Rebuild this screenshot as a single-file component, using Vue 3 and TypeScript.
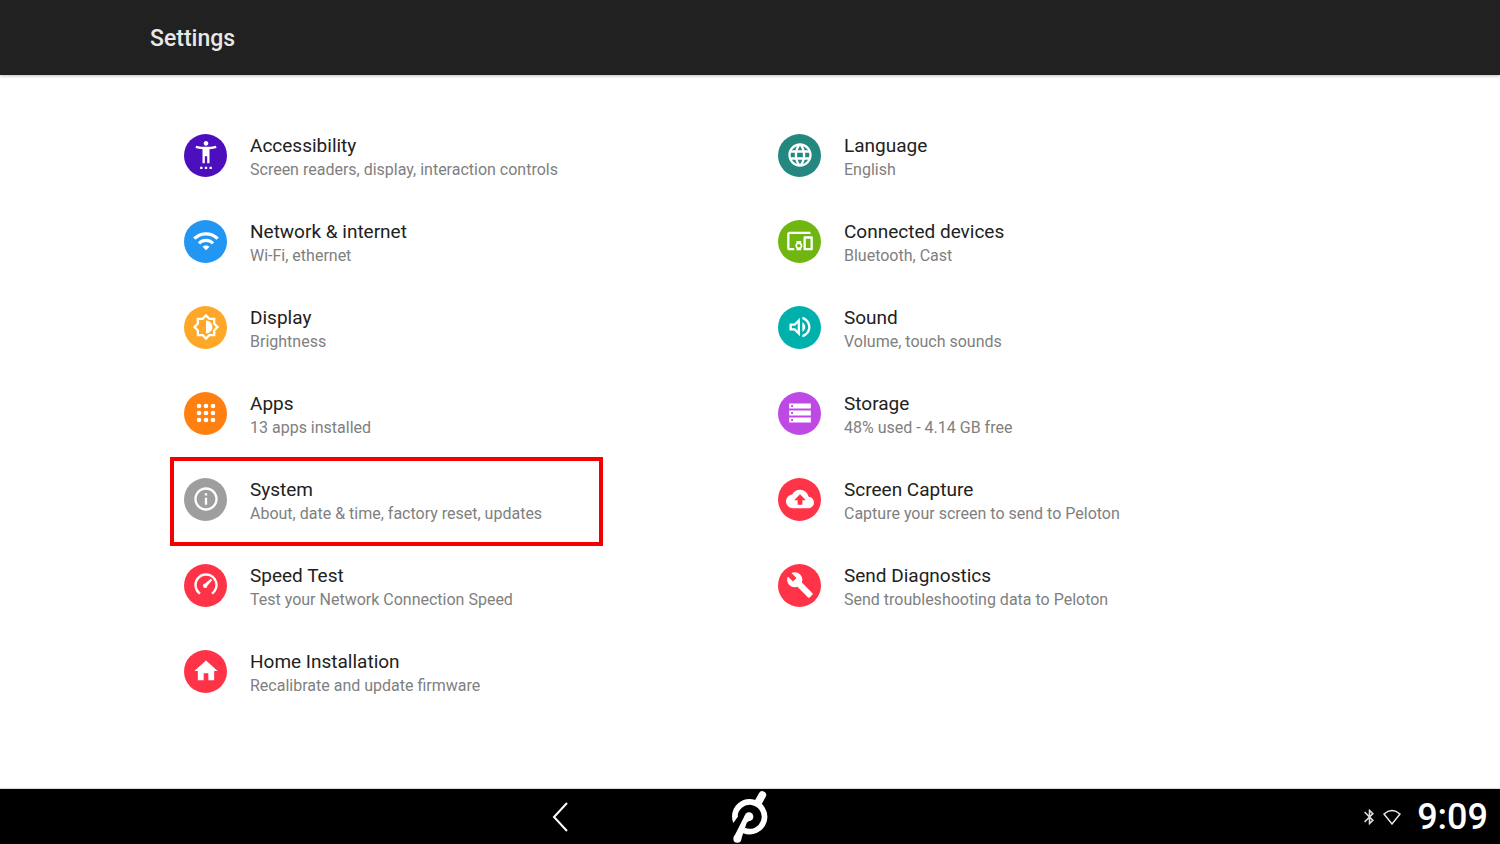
<script setup lang="ts">
interface SettingItem {
  title: string
  detail: string
  color: string
  path: string
  marked?: boolean
}

const items: SettingItem[] = [
  {
    title: 'Accessibility',
    detail: 'Screen readers, display, interaction controls',
    color: '#4d0fbe',
    path: 'M20.5 4c-2.61.7-5.67 1-8.5 1s-5.89-.3-8.5-1L3 6c1.86.5 4 .83 6 1v12h2v-6h2v6h2V7c2-.17 4.14-.5 6-1l-.5-2zM12 4c1.1 0 2-.9 2-2s-.9-2-2-2-2 .9-2 2 .9 2 2 2zM7 24h2v-2H7v2zm4 0h2v-2h-2v2zm4 0h2v-2h-2v2z',
  },
  {
    title: 'Language',
    detail: 'English',
    color: '#248880',
    path: 'M11.99 2C6.47 2 2 6.48 2 12s4.47 10 9.99 10C17.52 22 22 17.52 22 12S17.52 2 11.99 2zm6.93 6h-2.95c-.32-1.25-.78-2.45-1.38-3.56 1.84.63 3.37 1.91 4.33 3.56zM12 4.04c.83 1.2 1.48 2.53 1.91 3.96h-3.82c.43-1.43 1.08-2.76 1.91-3.96zM4.26 14C4.1 13.36 4 12.69 4 12s.1-1.36.26-2h3.38c-.08.66-.14 1.32-.14 2s.06 1.34.14 2H4.26zm.82 2h2.95c.32 1.25.78 2.45 1.38 3.56-1.84-.63-3.37-1.9-4.33-3.56zm2.95-8H5.08c.96-1.66 2.49-2.93 4.33-3.56C8.81 5.55 8.35 6.75 8.03 8zM12 19.96c-.83-1.2-1.48-2.53-1.91-3.96h3.82c-.43 1.43-1.08 2.76-1.91 3.96zM14.34 14H9.66c-.09-.66-.16-1.32-.16-2s.07-1.35.16-2h4.68c.09.65.16 1.32.16 2s-.07 1.34-.16 2zm.25 5.56c.6-1.11 1.06-2.31 1.38-3.56h2.95c-.96 1.65-2.49 2.93-4.33 3.56zM16.36 14c.08-.66.14-1.32.14-2s-.06-1.34-.14-2h3.38c.16.64.26 1.31.26 2s-.1 1.36-.26 2h-3.38z',
  },
  {
    title: 'Network & internet',
    detail: 'Wi-Fi, ethernet',
    color: '#2196f3',
    path: 'M1 9l2 2c4.97-4.97 13.03-4.97 18 0l2-2C16.93 2.93 7.08 2.93 1 9zm8 8l3 3 3-3c-1.65-1.66-4.34-1.66-6 0zm-4-4l2 2c2.76-2.76 7.24-2.76 10 0l2-2C15.14 9.14 8.87 9.14 5 13z',
  },
  {
    title: 'Connected devices',
    detail: 'Bluetooth, Cast',
    color: '#6fb710',
    path: 'M3 6h18V4H3c-1.1 0-2 .9-2 2v12c0 1.1.9 2 2 2h4v-2H3V6zm10 6H9v1.78c-.61.55-1 1.33-1 2.22s.39 1.67 1 2.22V20h4v-1.78c.61-.55 1-1.34 1-2.22s-.39-1.67-1-2.22V12zm-2 5.5c-.83 0-1.5-.67-1.5-1.5s.67-1.5 1.5-1.5 1.5.67 1.5 1.5-.67 1.5-1.5 1.5zM22 8h-6c-.5 0-1 .5-1 1v10c0 .5.5 1 1 1h6c.5 0 1-.5 1-1V9c0-.5-.5-1-1-1zm-1 10h-4v-8h4v8z',
  },
  {
    title: 'Display',
    detail: 'Brightness',
    color: '#ffa726',
    path: 'M20 8.69V4h-4.69L12 .69 8.69 4H4v4.69L.69 12 4 15.31V20h4.69L12 23.31 15.31 20H20v-4.69L23.31 12 20 8.69zm-2 5.79V18h-3.52L12 20.48 9.52 18H6v-3.52L3.52 12 6 9.52V6h3.52L12 3.52 14.48 6H18v3.52L20.48 12 18 14.48zM12 6.5v11c3.03 0 5.5-2.47 5.5-5.5S15.03 6.5 12 6.5z',
  },
  {
    title: 'Sound',
    detail: 'Volume, touch sounds',
    color: '#00b0ac',
    path: 'M3 9v6h4l5 5V4L7 9H3zm7-.17v6.34L7.83 13H5v-2h2.83L10 8.83zM16.5 12c0-1.77-1.02-3.29-2.5-4.03v8.05c1.48-.73 2.5-2.25 2.5-4.02zM14 3.23v2.06c2.89.86 5 3.54 5 6.71s-2.11 5.85-5 6.71v2.06c4.01-.91 7-4.49 7-8.77s-2.99-7.86-7-8.77z',
  },
  {
    title: 'Apps',
    detail: '13 apps installed',
    color: '#ff7f11',
    path: 'M6 4a2 2 0 1 1 0 4a2 2 0 0 1 0-4zM12 4a2 2 0 1 1 0 4a2 2 0 0 1 0-4zM18 4a2 2 0 1 1 0 4a2 2 0 0 1 0-4zM6 10a2 2 0 1 1 0 4a2 2 0 0 1 0-4zM12 10a2 2 0 1 1 0 4a2 2 0 0 1 0-4zM18 10a2 2 0 1 1 0 4a2 2 0 0 1 0-4zM6 16a2 2 0 1 1 0 4a2 2 0 0 1 0-4zM12 16a2 2 0 1 1 0 4a2 2 0 0 1 0-4zM18 16a2 2 0 1 1 0 4a2 2 0 0 1 0-4z',
  },
  {
    title: 'Storage',
    detail: '48% used - 4.14 GB free',
    color: '#bf49e5',
    path: 'M2.7 3.9h18.6v4.2H2.7zM4.4 5.2v1.6H6V5.200zM2.7 9.900h18.6v4.200H2.7zM4.4 11.200v1.600H6v-1.600zM2.700 15.900h18.600v4.200H2.700zM4.400 17.200v1.600H6v-1.600z',
  },
  {
    title: 'System',
    detail: 'About, date & time, factory reset, updates',
    color: '#9e9e9e',
    path: 'M11 7h2v2h-2zm0 4h2v6h-2zm1-9C6.48 2 2 6.48 2 12s4.48 10 10 10 10-4.48 10-10S17.52 2 12 2zm0 18c-4.41 0-8-3.59-8-8s3.59-8 8-8 8 3.59 8 8-3.59 8-8 8z',
    marked: true,
  },
  {
    title: 'Screen Capture',
    detail: 'Capture your screen to send to Peloton',
    color: '#ff3347',
    path: 'M19.35 10.04C18.67 6.59 15.64 4 12 4 9.11 4 6.6 5.64 5.35 8.04 2.34 8.36 0 10.91 0 14c0 3.31 2.69 6 6 6h13c2.76 0 5-2.24 5-5 0-2.64-2.05-4.78-4.65-4.96zM14 13v4h-4v-4H7l5-5 5 5h-3z',
  },
  {
    title: 'Speed Test',
    detail: 'Test your Network Connection Speed',
    color: '#ff3347',
    path: 'M12 2A10 10 0 0 0 2 12c0 3.3 1.6 6.3 4.1 8.1l1.4-1.5A8 8 0 1 1 20 12c0 2.7-1.4 5.1-3.5 6.6l1.4 1.5A10 10 0 0 0 12 2zM17.3 7.9l-1.2-1.2-4.8 4.1a1.9 1.9 0 1 0 1.9 1.9z',
  },
  {
    title: 'Send Diagnostics',
    detail: 'Send troubleshooting data to Peloton',
    color: '#ff3347',
    path: 'M22.7 19l-9.1-9.1c.9-2.3.4-5-1.5-6.9-2-2-5-2.4-7.4-1.3L9 6 6 9 1.6 4.7C.4 7.1.9 10.1 2.9 12.1c1.9 1.9 4.6 2.4 6.9 1.5l9.1 9.1c.4.4 1 .4 1.4 0l2.3-2.3c.5-.4.5-1.1.1-1.4z',
  },
  {
    title: 'Home Installation',
    detail: 'Recalibrate and update firmware',
    color: '#ff3347',
    path: 'M10 20v-6h4v6h5v-8h3L12 3 2 12h3v8z',
  },
]
</script>

<template>
  <div class="screen">
    <header class="top-bar">
      <h1>Settings</h1>
    </header>

    <main class="settings">
      <a v-for="item in items" :key="item.title" href="#" class="setting">
        <span class="badge" :style="{ backgroundColor: item.color }">
          <svg viewBox="0 0 24 24" aria-hidden="true"><path :d="item.path" fill-rule="evenodd" /></svg>
        </span>
        <span class="labels">
          <span class="title">{{ item.title }}</span>
          <span class="detail">{{ item.detail }}</span>
        </span>
        <span v-if="item.marked" class="marker"></span>
      </a>
    </main>

    <nav class="nav-bar" aria-label="Navigation">
      <div class="side start">
        <button type="button" class="back" aria-label="Back">
          <svg viewBox="0 0 16 30" aria-hidden="true"><path d="M15 1L2 15L15 29" /></svg>
        </button>
      </div>
      <button type="button" class="home" aria-label="Home">
        <svg viewBox="600 28 120 162" aria-hidden="true">
          <path class="ring" d="M614.500 108A44.500 44.500 0 1 1 641 149" />
          <path d="M606 106L623 106L623 109L610 127Q606 117 606 106z" />
          <path class="handle" d="M697 43L686 63" />
          <path d="M645 103L668 115L658 121Q653 122 650 127L632 180L612 168z" />
          <circle cx="622" cy="174" r="12" />
          <circle cx="657" cy="108" r="13" />
        </svg>
      </button>
      <div class="side end">
        <svg class="bluetooth" viewBox="5 2 14 20" aria-hidden="true">
          <path d="M17.71 7.710L12 2h-1v7.590L6.410 5 5 6.410 10.590 12 5 17.590 6.410 19 11 14.410V22h1l5.710-5.710-4.300-4.290 4.300-4.290zM13 5.830l1.880 1.880L13 9.590V5.830zm1.880 10.460L13 18.170v-3.760l1.880 1.880z" />
        </svg>
        <svg class="wifi" viewBox="0 0 18 16" aria-hidden="true"><path d="M1 5Q9 -2 17 5L9 15z" /></svg>
        <time>9:09</time>
      </div>
    </nav>
  </div>
</template>

<style>
body {
  margin: 0;
}
</style>

<style scoped>
.screen {
  display: flex;
  flex-direction: column;
  min-height: 100vh;
  background: #fff;
  font-family: Roboto, "Liberation Sans", sans-serif;
}

.top-bar {
  display: flex;
  align-items: center;
  box-sizing: border-box;
  height: 75px;
  padding: 2px 10% 0;
  background: #212121;
  box-shadow: 0 1px 3px rgba(0, 0, 0, 0.25);
}

h1 {
  margin: 0;
  color: #e8e8e8;
  font-size: 23px;
  font-weight: 500;
  line-height: 28px;
}

.settings {
  flex: 1;
  display: grid;
  grid-template-columns: 1fr 1fr;
  grid-auto-rows: 86px;
  align-content: start;
  padding: 37px 156px;
}

.setting {
  position: relative;
  display: flex;
  align-items: center;
  gap: 23px;
  padding: 0 28px;
  color: inherit;
  text-decoration: none;
}

.badge {
  display: flex;
  align-items: center;
  justify-content: center;
  flex: none;
  width: 43px;
  height: 43px;
  border-radius: 50%;
}

.badge svg {
  width: 28px;
  height: 28px;
  fill: #fff;
}

.labels {
  display: flex;
  flex-direction: column;
  padding-top: 6px;
}

.title {
  color: #212121;
  font-size: 19px;
  line-height: 24px;
}

.detail {
  color: #808080;
  font-size: 16px;
  line-height: 24px;
}

.marker {
  position: absolute;
  top: 1px;
  left: 14px;
  box-sizing: border-box;
  width: 433px;
  height: 89px;
  border: 4px solid #f50000;
}

.nav-bar {
  display: grid;
  grid-template-columns: 1fr auto 1fr;
  align-items: center;
  height: 55px;
  background: #000;
  box-shadow: 0 -1px 1px #ddd;
}

.nav-bar button {
  display: flex;
  padding: 0;
  border: 0;
  background: none;
}

.side {
  display: flex;
  align-items: center;
  justify-content: flex-end;
}

.start {
  padding-right: 162px;
}

.end {
  padding-right: 12px;
}

.back svg {
  width: 16px;
  height: 30px;
  fill: none;
  stroke: #fff;
  stroke-width: 2;
}

.home svg {
  width: 40px;
  height: 54px;
  fill: #fff;
}

.home .ring {
  fill: none;
  stroke: #fff;
  stroke-width: 17;
}

.home .handle {
  fill: none;
  stroke: #fff;
  stroke-width: 23;
  stroke-linecap: round;
}

.bluetooth {
  width: 11px;
  height: 16px;
  margin-right: 8px;
  fill: #ddd;
}

.wifi {
  width: 18px;
  height: 16px;
  margin-right: 16px;
  fill: none;
  stroke: #eee;
  stroke-width: 1.4;
}

time {
  color: #fff;
  font-size: 36px;
  font-weight: 500;
  line-height: 40px;
}
</style>
